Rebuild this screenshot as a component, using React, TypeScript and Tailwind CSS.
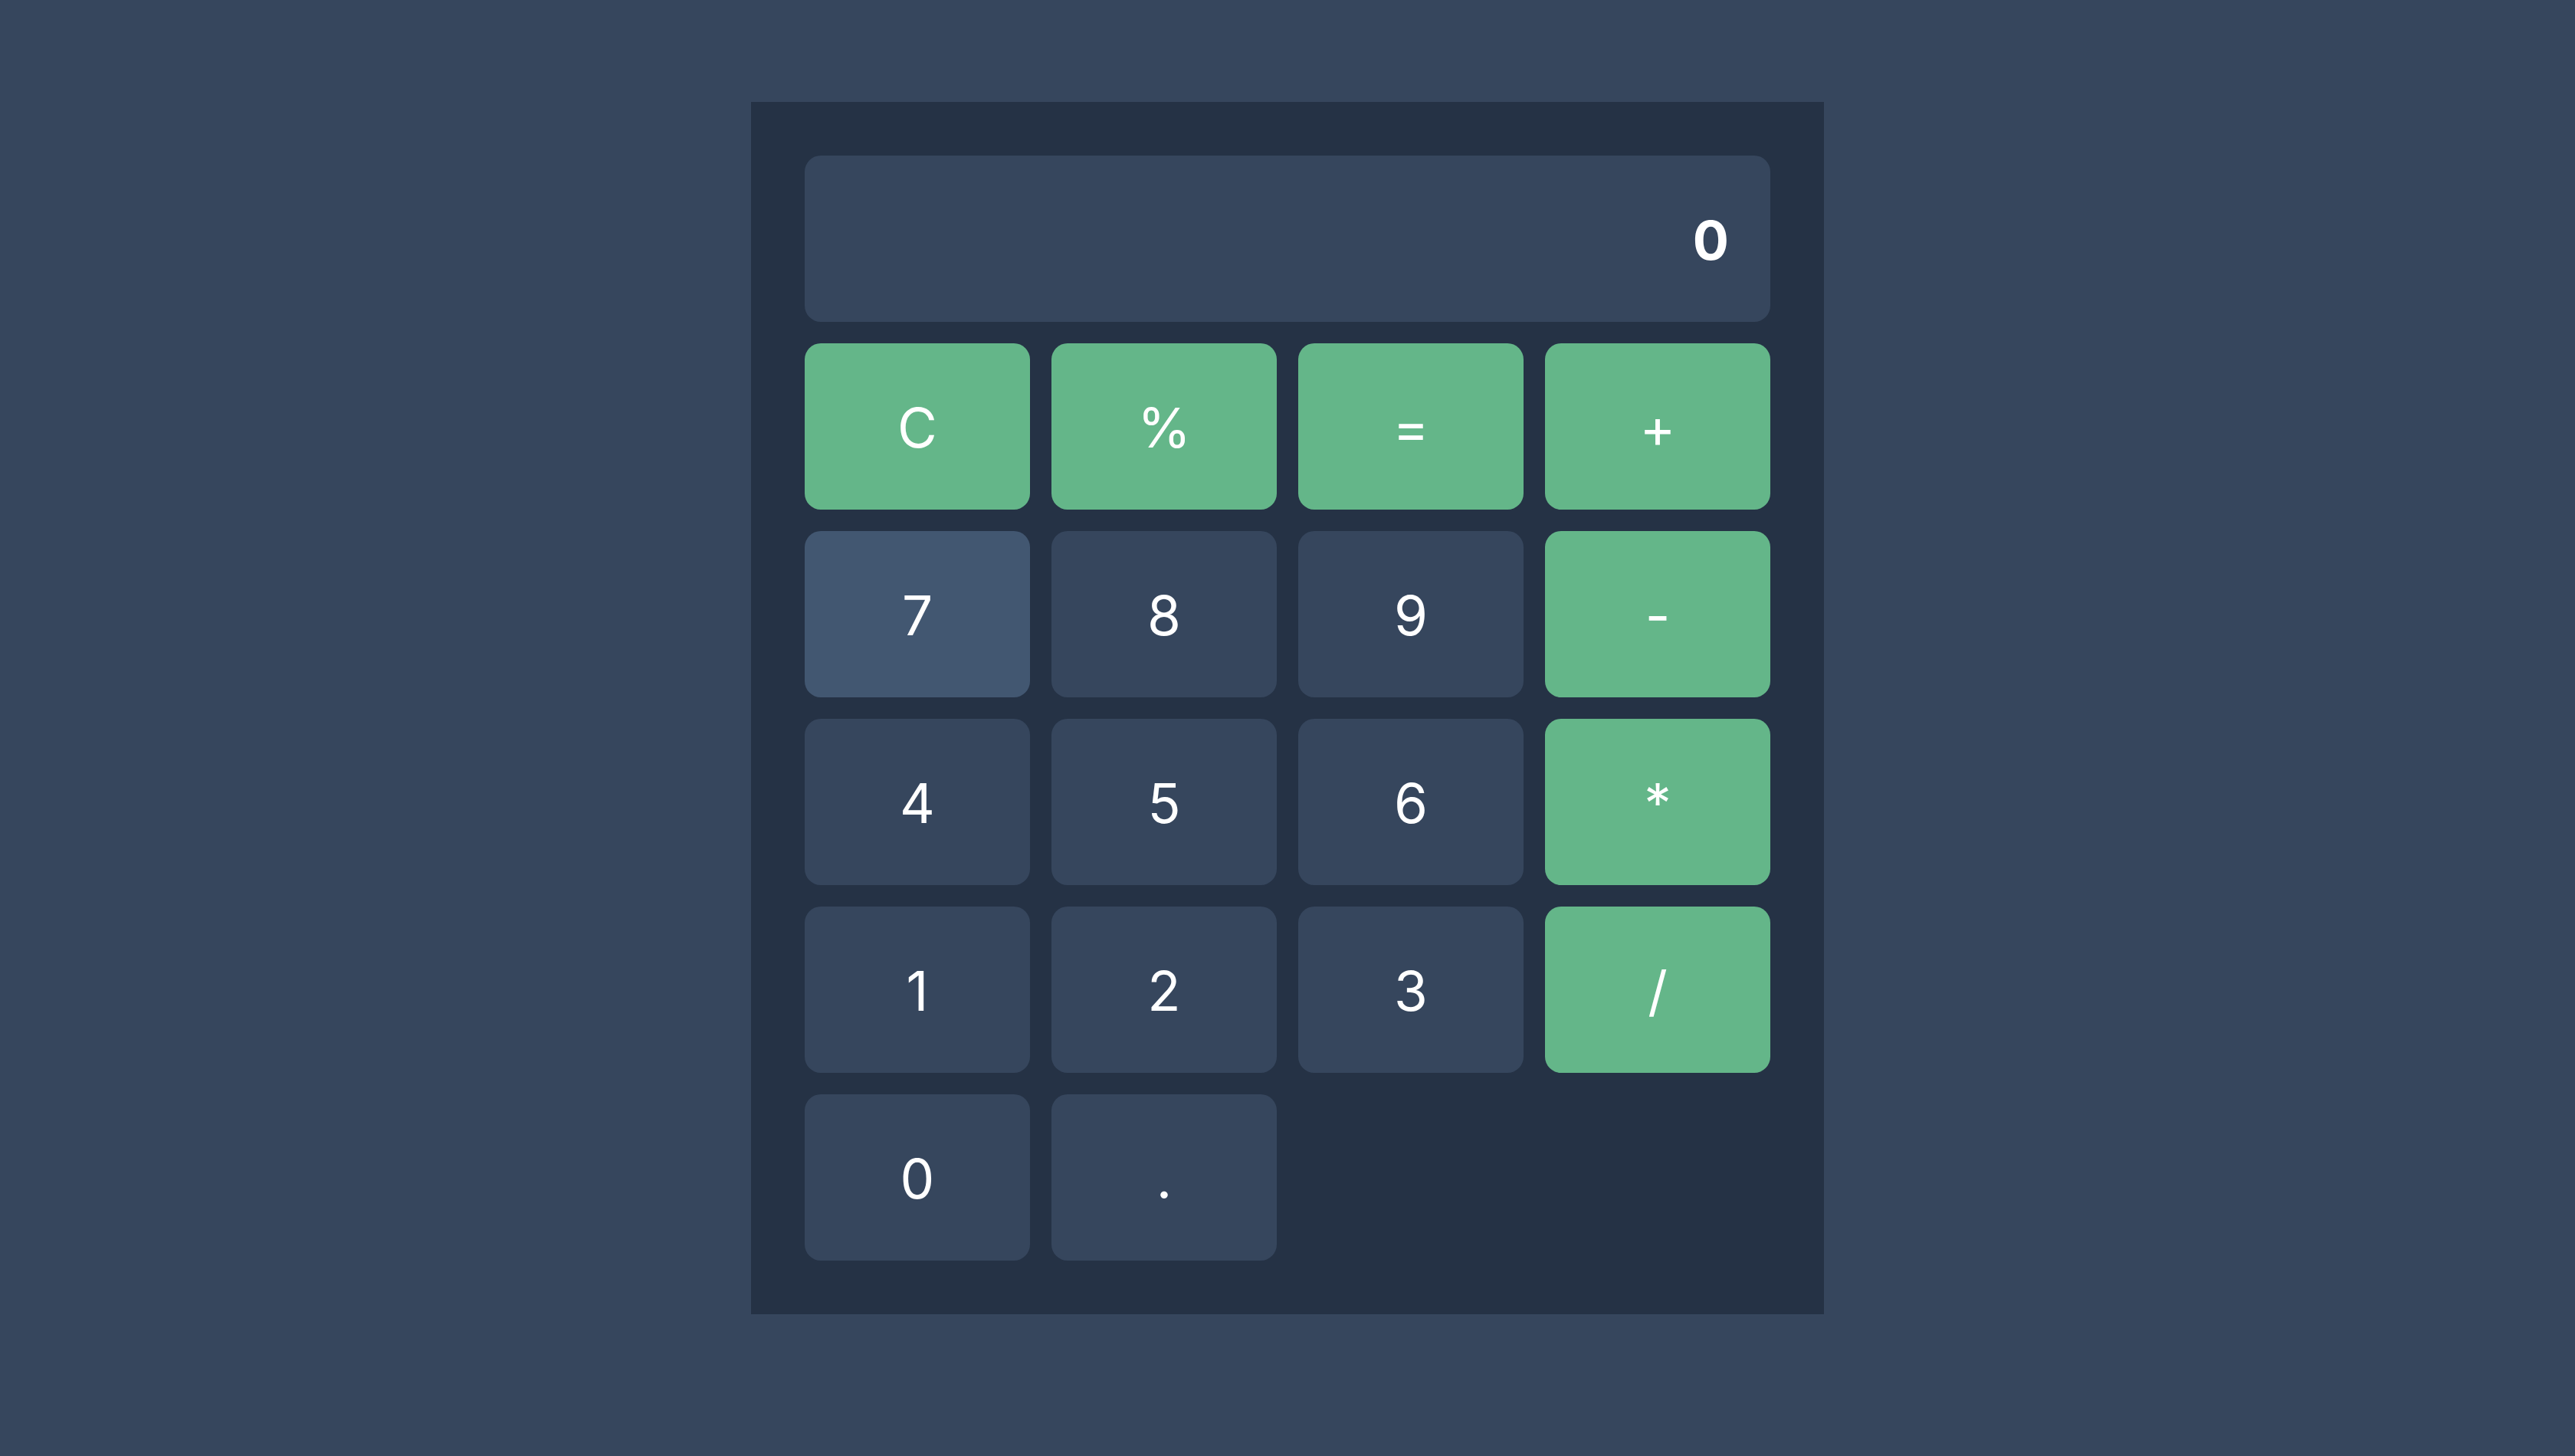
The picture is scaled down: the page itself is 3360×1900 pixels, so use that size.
const keys: { label: string; op?: boolean; hover?: boolean }[] = [
  { label: "C", op: true },
  { label: "%", op: true },
  { label: "=", op: true },
  { label: "+", op: true },
  { label: "7", hover: true },
  { label: "8" },
  { label: "9" },
  { label: "-", op: true },
  { label: "4" },
  { label: "5" },
  { label: "6" },
  { label: "*", op: true },
  { label: "1" },
  { label: "2" },
  { label: "3" },
  { label: "/", op: true },
  { label: "0" },
  { label: "." },
];

export default function App() {
  return (
    <div
      className="min-h-screen w-full bg-[#36465d] flex justify-center pt-[133px]"
      style={{ fontFamily: "Inter, 'Noto Sans', sans-serif" }}
    >
      <div className="w-[1400px] h-[1582px] bg-[#253245] p-[70px] flex flex-col gap-[28px]">
        {/* display */}
        <div className="h-[217px] rounded-[21px] bg-[#36465d] flex items-center justify-end pl-[58px] pr-[54px] pt-[4px]">
          <span className="text-white text-[70px] font-bold leading-none">0</span>
        </div>

        <div className="grid grid-cols-4 gap-[28px] auto-rows-[217px]">
          {keys.map((k) => (
            <button
              key={k.label}
              className={
                "rounded-[21px] flex items-center justify-center pt-[4px] text-white text-[71px] font-normal leading-none " +
                (k.op ? "bg-[#64b689]" : k.hover ? "bg-[#425771]" : "bg-[#36465d]")
              }
            >
              {k.label}
            </button>
          ))}
        </div>
      </div>
    </div>
  );
}
